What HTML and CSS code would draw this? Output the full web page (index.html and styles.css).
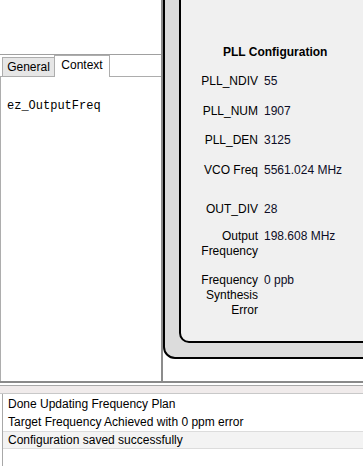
FILE: index.html
```html
<!DOCTYPE html>
<html lang="en">
<head>
    <meta charset="UTF-8">
    <meta name="viewport" content="width=device-width, initial-scale=1.0">
    <title>PLL Configuration</title>
    <link rel="stylesheet" href="styles.css">
</head>
<body>
    <div class="workspace">
        <div class="side">
            <div class="side-top"></div>
            <div class="tabs">
                <div class="tab">General</div>
                <div class="tab tab-active">Context</div>
            </div>
            <div class="tab-body">
                <div class="context-name">ez_OutputFreq</div>
            </div>
        </div>
        <div class="splitter"></div>
        <div class="main">
            <div class="frame">
                <div class="panel">
                    <div class="panel-title">PLL Configuration</div>
                    <div class="fields">
                        <div class="label">PLL_NDIV</div><div class="value">55</div>
                        <div class="label">PLL_NUM</div><div class="value">1907</div>
                        <div class="label">PLL_DEN</div><div class="value">3125</div>
                        <div class="label">VCO Freq</div><div class="value">5561.024 MHz</div>
                        <div class="label spaced">OUT_DIV</div><div class="value spaced">28</div>
                        <div class="label tight">Output<br>Frequency</div><div class="value tight">198.608 MHz</div>
                        <div class="label">Frequency<br>Synthesis<br>Error</div><div class="value">0 ppb</div>
                    </div>
                </div>
            </div>
        </div>
    </div>

    <div class="log-area">
        <div class="log-band"></div>
        <div class="log-list">
            <div class="log-row">Done Updating Frequency Plan</div>
            <div class="log-row">Target Frequency Achieved with 0 ppm error</div>
            <div class="log-row log-selected">Configuration saved successfully</div>
        </div>
    </div>
</body>
</html>
```

FILE: styles.css
```css
body {
    margin: 0;
    padding: 0;
    width: 363px;
    height: 466px;
    overflow: hidden;
    background: #fff;
    color: #000;
    font-family: 'Liberation Sans', Arial, sans-serif;
    font-size: 12px;
}
.workspace {
    display: flex;
    height: 381px;
}
.side {
    width: 161px;
    display: flex;
    flex-direction: column;
    background: #fff;
}
.side-top {
    height: 54px;
    border-bottom: 1px solid #a0a0a0;
}
.tabs {
    display: flex;
    align-items: flex-end;
    height: 21px;
    padding-left: 2px;
}
.tab {
    box-sizing: border-box;
    width: 53px;
    height: 19px;
    line-height: 18px;
    text-align: center;
    background: #e6e6e6;
    border: 1px solid #adadad;
    border-bottom: none;
}
.tab-active {
    width: 56px;
    height: 22px;
    line-height: 19px;
    margin-bottom: -1px;
    margin-left: -1px;
    background: #fff;
    position: relative;
}
.tab-body {
    flex: 1;
    border-top: 1px solid #adadad;
    border-left: 1px solid #adadad;
    padding: 22px 6px;
}
.context-name {
    font-family: 'Liberation Mono', 'Courier New', monospace;
    font-size: 12px;
    line-height: 15px;
}
.splitter {
    width: 2px;
    background: #8c8c8c;
}
.main {
    flex: 1;
    overflow: hidden;
}
.frame {
    box-sizing: border-box;
    height: 379px;
    margin: -20px -20px 0 0;
    padding: 0 0 14px 14px;
    display: flex;
    flex-direction: column;
    background: #dcdcdc;
    border: 2px solid #000;
    border-radius: 12px;
}
.panel {
    flex: 1;
    background: #f0f0f0;
    border: 2px solid #000;
    border-radius: 10px;
    padding-top: 61px;
}
.panel-title {
    font-weight: bold;
    line-height: 15px;
    padding-left: 42px;
    margin-bottom: 14px;
}
.fields {
    display: grid;
    grid-template-columns: 77px auto;
    column-gap: 6px;
    row-gap: 14.5px;
    line-height: 15px;
}
.label {
    text-align: right;
}
.value {
    color: #0d0d26;
}
.spaced {
    margin-top: 10px;
}
.tight {
    margin-top: -3px;
}
.log-area {
    border-top: 2px solid #8a8a8a;
    padding-top: 2px;
}
.log-band {
    height: 7px;
    background: #f0ebeb;
    border-top: 1px solid #a8a8a8;
    border-bottom: 1px solid #c8c8c8;
}
.log-list {
    margin-left: 2px;
    border-left: 1px solid #a8a8a8;
    padding-top: 1px;
    height: 80px;
}
.log-row {
    box-sizing: border-box;
    height: 18px;
    line-height: 18px;
    padding-left: 5px;
    white-space: nowrap;
}
.log-selected {
    background: #f3f3f3;
    border-top: 1px solid #dcdcdc;
    border-bottom: 1px solid #dcdcdc;
    line-height: 16px;
}
```
